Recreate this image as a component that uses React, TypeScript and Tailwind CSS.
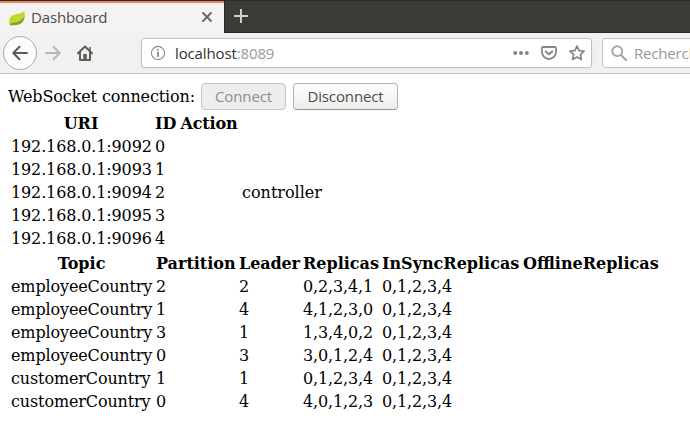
import type { ReactNode } from "react";

const brokers = [
  ["192.168.0.1:9092", "0", "", ""],
  ["192.168.0.1:9093", "1", "", ""],
  ["192.168.0.1:9094", "2", "", "controller"],
  ["192.168.0.1:9095", "3", "", ""],
  ["192.168.0.1:9096", "4", "", ""],
];

const topics = [
  ["employeeCountry", "2", "2", "0,2,3,4,1", "0,1,2,3,4", ""],
  ["employeeCountry", "1", "4", "4,1,2,3,0", "0,1,2,3,4", ""],
  ["employeeCountry", "3", "1", "1,3,4,0,2", "0,1,2,3,4", ""],
  ["employeeCountry", "0", "3", "3,0,1,2,4", "0,1,2,3,4", ""],
  ["customerCountry", "1", "1", "0,1,2,3,4", "0,1,2,3,4", ""],
  ["customerCountry", "0", "4", "4,0,1,2,3", "0,1,2,3,4", ""],
];

function Table({ width, cols, head, rows }: { width: string; cols: string[]; head: string[]; rows: string[][] }) {
  return (
    <table className={`table-fixed border-separate border-spacing-[2px] ${width}`}>
      <colgroup>
        {cols.map((c, i) => (
          <col key={i} className={c} />
        ))}
      </colgroup>
      <thead>
        <tr>
          {head.map((h, i) => (
            <th
              key={i}
              className={`h-[21px] p-px text-center font-bold whitespace-nowrap ${h === "Leader" || h === "Action" ? "tracking-[-0.12px]" : ""}`}
            >
              {h}
            </th>
          ))}
        </tr>
      </thead>
      <tbody>
        {rows.map((r, i) => (
          <tr key={i}>
            {r.map((c, j) => (
              <td key={j} className={`h-[21px] p-px whitespace-nowrap ${c === "controller" ? "" : "tracking-[-0.13px]"}`}>
                {c}
              </td>
            ))}
          </tr>
        ))}
      </tbody>
    </table>
  );
}

function Icon({ children, className }: { children: ReactNode; className: string }) {
  return (
    <svg viewBox="0 0 16 16" fill="none" strokeLinecap="round" strokeLinejoin="round" className={`size-4 shrink-0 ${className}`}>
      {children}
    </svg>
  );
}

export default function App() {
  return (
    <div className="h-[443px] w-[690px] overflow-hidden bg-white text-black">
      <header className="font-['Open_Sans',sans-serif] text-[15px] text-[#4c4c4c]">
        <div className="flex h-[33px] border-t border-[#2b2a27] bg-[#3c3b37]">
          <div className="flex w-[224px] items-center border-t-2 border-[#f0825c] bg-[#f4f3f2] pb-[2px] pl-[9px]">
            <Icon className="mt-px">
              <path d="M.8 15C-.6 10 .6 6 5 4.8 9 3.8 12.8 3.6 15.4.9 16.2 5 15.8 10 12.6 12.8 9.5 15.2 5.5 14.6.8 15Z" fill="#c3d42c" />
              <path d="M.8 15.2C1 13.2 2.2 12.2 4.5 12.1 9 12 12.5 10.5 15.5 6 15.3 9.5 14.2 12 12 13.6 8.5 15.8 5 15 .8 15.2Z" fill="#7da62b" />
              <path d="M1.5 13.2C3 12 4 12.3 6 11.8 10 11 12.8 8.6 14.6 5.6" stroke="#dce45c" strokeWidth=".8" />
            </Icon>
            <span className="ml-[6px] w-[166px] leading-5 tracking-[-0.13px]">Dashboard</span>
            <Icon className="ml-[2px] stroke-[#666]">
              <path d="M4 4l8 8M12 4l-8 8" strokeWidth="1.8" />
            </Icon>
          </div>
          <div className="flex flex-1 items-center border-b border-l border-[#2b2a27] pb-px pl-2">
            <Icon className="stroke-[#d3cdc8]">
              <path d="M8 1v14M1 8h14" strokeWidth="2" strokeLinecap="butt" />
            </Icon>
          </div>
        </div>
        <div className="flex h-[41px] items-center border-b border-[#c4c2c0] bg-[#f2f1f0] pl-[3px]">
          <div className="flex size-[34px] shrink-0 items-center justify-center rounded-full border border-[#aaa] bg-[#fcfcfc]">
            <Icon className="stroke-[#5a5a5a]">
              <path d="M15 8H1.5M7.5 1.8L1.3 8l6.2 6.2" strokeWidth="2" />
            </Icon>
          </div>
          <Icon className="ml-2 stroke-[#b8b7b6]">
            <path d="M1 8h13.5M8.5 1.8L14.7 8l-6.2 6.2" strokeWidth="2" />
          </Icon>
          <Icon className="ml-4">
            <path d="M1 8.3L8 1.5l7 6.8M3 7.5V15h10V7.5" stroke="#5e5d5a" strokeWidth="2" />
            <path d="M6.2 15V9h3.6v6Z" fill="#5e5d5a" />
            <path d="M13 2.5v4" stroke="#5e5d5a" strokeWidth="1.5" />
          </Icon>
          <div className="ml-12 flex h-[30px] w-[451px] shrink-0 items-center rounded-[3px] border border-[#c3c2c1] bg-white pl-[8px] shadow-[0_1px_3px_#0000000d]">
            <Icon className="stroke-[#8c8c8c]">
              <circle cx="8" cy="8" r="6.6" strokeWidth="1.1" />
              <path d="M8 7.5v3.8M8 4.6v.3" strokeWidth="1.8" />
            </Icon>
            <span className="ml-[9px] w-[338px] leading-5 tracking-[-0.13px] text-[#333]">
              localhost<span className="text-[#999]">:8089</span>
            </span>
            <Icon className="fill-[#858585]">
              <circle cx="2.2" cy="8" r="2" />
              <circle cx="8" cy="8" r="2" />
              <circle cx="13.8" cy="8" r="2" />
            </Icon>
            <Icon className="ml-3 stroke-[#858585]">
              <path d="M2 2h12a1 1 0 011 1v4a7 7 0 01-14 0V3a1 1 0 011-1Z" strokeWidth="1.8" />
              <path d="M4.8 6.4L8 9.3l3.2-2.9" strokeWidth="2" />
            </Icon>
            <Icon className="ml-3 stroke-[#858585]">
              <path d="M8 1l2.1 4.7 5 .5-3.7 3.4 1.1 5L8 12l-4.5 2.6 1.1-5L.9 6.2l5-.5Z" strokeWidth="1.7" />
            </Icon>
          </div>
          <div className="ml-[10px] flex h-[30px] w-[120px] shrink-0 items-center rounded-[3px] border border-[#c3c2c1] bg-white pl-2">
            <Icon className="stroke-[#a5a5a5]">
              <circle cx="6.2" cy="6.2" r="4.9" strokeWidth="1.9" />
              <path d="M10 10l5 5" strokeWidth="2.1" />
            </Icon>
            <span className="ml-[7px] leading-5 tracking-[-0.2px] text-[#999]">Recherch</span>
          </div>
        </div>
      </header>
      <main className="px-2 pt-2 font-['DejaVu_Serif',serif] text-[16px] leading-[19px]">
        <div className="flex h-[29px] items-center pb-px">
          <span className="w-[193px] tracking-[-0.12px] whitespace-nowrap">WebSocket connection:</span>
          <button disabled className="h-[27px] w-[85px] rounded-[4px] border border-[#c6c6c6] bg-[#ededed] font-['Open_Sans',sans-serif] text-[15px] tracking-[-0.12px] text-[#8f8d8a]">
            Connect
          </button>
          <button className="ml-[7px] h-[27px] w-[105px] rounded-[4px] border border-[#b4b2b0] border-b-[#929090] bg-linear-to-b from-white to-[#ededec] font-['Open_Sans',sans-serif] text-[15px] tracking-[-0.12px] text-[#4c4c4c]">
            Disconnect
          </button>
        </div>
        <Table
          width="w-[316px]"
          cols={["w-[142px]", "w-[23px]", "w-[60px]", "w-[81px]"]}
          head={["URI", "ID", "Action", ""]}
          rows={brokers}
        />
        <Table
          width="w-[653px]"
          cols={["w-[143px]", "w-[81px]", "w-[62px]", "w-[77px]", "w-[139px]", "w-[137px]"]}
          head={["Topic", "Partition", "Leader", "Replicas", "InSyncReplicas", "OfflineReplicas"]}
          rows={topics}
        />
      </main>
    </div>
  );
}
